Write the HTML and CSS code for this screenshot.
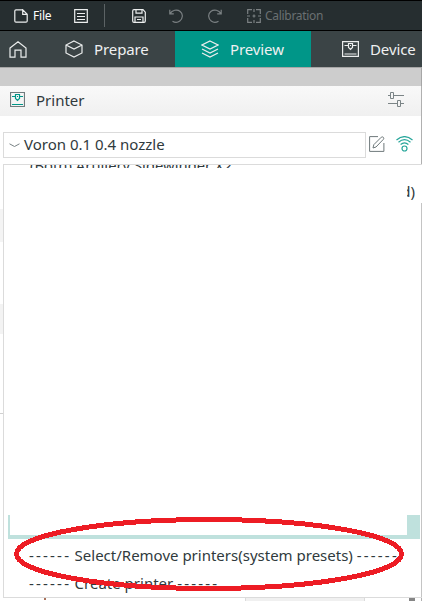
FILE: index.html
```
<!DOCTYPE html>
<html lang="en">
<head>
<meta charset="utf-8">
<title>Printer presets</title>
<link rel="stylesheet" href="styles.css">
</head>
<body>
<div class="app">
  <header class="menu">
    <svg class="i-file" width="14" height="14" viewBox="0 0 14 14"><path d="M8.5.8H2Q.8.8.8 2v10Q.8 13.2 2 13.2h10q1.200 0 1.200-1.200V5.300L8.700.8v4.500h4.500"/></svg>
    <span class="file">File</span>
    <svg class="i-list" width="14" height="14" viewBox="0 0 14 14"><path d="M.7.700h12.600v12.600H.7zM3 4.500h8M3 7.500h8M3 10.500h8"/></svg>
    <i class="sep"></i>
    <svg class="i-save" width="14" height="14" viewBox="0 0 14 14"><path d="M.7 2Q.7.700 2 .700h9l2.300 2.500V12q0 1.300-1.300 1.300H2Q.7 13.300.7 12zM4 .700v3.500h6V.700M3 13V8h8v5M5 10.500h4"/></svg>
    <svg class="i-undo dim" width="14" height="14" viewBox="0 0 14 14"><path d="M.8.800v4h4M1 4.800C3 1 8 0 11.200 2.400s2.600 7.500-.4 9.600c-2 1.500-5 1.600-7.300.2"/></svg>
    <svg class="i-redo dim" width="14" height="14" viewBox="0 0 14 14"><path d="M13.200.800v4h-4M13 4.800C11 1 6 0 2.800 2.400s-2.600 7.500.4 9.600c2 1.500 5 1.600 7.300.2"/></svg>
    <svg class="i-cal dim" width="14" height="14" viewBox="0 0 14 14"><path d="M5 .700H.700V5M9 .700h4.300V5M5 13.300H.700V9M9 13.300h4.300V9M7 0v3M7 11v3M0 7h3M11 7h3M5.500 7h3M7 5.500v3"/></svg>
    <span class="cal">Calibration</span>
  </header>
  <nav class="tabs">
    <div class="tab home"><svg width="18" height="17" viewBox="0 0 18 17"><path d="M1 7 9 .8 17 7v9.200h-5v-7H6v7H1z"/></svg></div>
    <div class="tab prepare"><svg width="18" height="18" viewBox="0 0 18 18"><path d="M9 1l8 4v8l-8 4-8-4V5zM1 5l8 4 8-4"/></svg><span>Prepare</span></div>
    <div class="tab preview"><svg width="18" height="18" viewBox="0 0 18 18"><path d="M9 1l8 4-8 4-8-4zM1 9l8 4 8-4M1 13l8 4 8-4"/></svg><span>Preview</span></div>
    <div class="tab device"><svg width="17" height="16" viewBox="0 0 17 16"><path d="M.6.600h15.800v14.800H.600zM2.500 13h12M2.500 4.500h4M10.500 4.500h4M6.500 2.500h4v4l-2 2-2-2zM8 4.500h1"/></svg><span>Device</span></div>
  </nav>
  <div class="band"></div>
  <section class="head">
    <svg class="i-printer" width="15" height="15" viewBox="0 0 15 15"><path class="frame" d="M.5.500h14v14H.5z"/><path d="M2 12.500h11M2 4.500h3.500M9.500 4.500H13M5.500 2.500h4v4l-2 2-2-2zM7 4.500h1"/></svg>
    <span class="title">Printer</span>
    <svg class="i-set" width="16" height="16" viewBox="0 0 16 16"><path d="M0 4.500h2.500M5.500 4.500H16M0 12.500h9.500M12.500 12.500H16M2.500 1.500h3v6h-3zM9.500 9.500h3v6h-3z"/></svg>
  </section>
  <section class="choose">
    <div class="combo"><svg width="11" height="5" viewBox="0 0 11 5"><path d="M.5.800 5.500 3.500 10.500.800"/></svg><span>Voron 0.1 0.4 nozzle</span></div>
    <svg class="i-edit" width="16" height="16" viewBox="0 0 16 16"><path d="M9 .600H.600v14.800h14.300V7M4 12l.8-3.300L12.300 1.200q1-.8 2 .1t.1 2L7 11z"/></svg>
    <svg class="i-wifi" width="17" height="16" viewBox="0 0 17 16"><path d="M.5 4Q8.500-2.800 16.500 4M2.500 6.200q6-5 12 0M4.600 8.500q3.900-3.400 7.800 0"/><circle cx="8.500" cy="12.500" r="2.500"/></svg>
  </section>
  <div class="rest"><i class="g1"></i><i class="g2"></i><i class="g3"></i><div class="bottom"><i class="speck"></i><i class="foot"></i><i class="thumb"></i></div></div>

  <div class="popup">
    <i class="edge"></i>
    <div class="cut"><span>(Both) Artillery Sidewinder X2</span></div>
    <div class="tail"><span>d)</span></div>
    <div class="selected"></div>
    <div class="opt remove"><span class="dash">------</span> Select/Remove printers(system presets) <span class="dash">------</span></div>
    <div class="opt create"><span class="dash">------</span> Create printer <span class="dash">------</span></div>
  </div>
  <svg class="ring" width="422" height="100" viewBox="0 0 422 100" shape-rendering="crispEdges"><ellipse cx="209" cy="53" rx="192.500" ry="34.500"/></svg>
</div>
</body>
</html>
```
FILE: styles.css
```
* { box-sizing: border-box; }
body { margin: 0; font-family: "Noto Sans", "Open Sans", sans-serif; }
svg { fill: none; stroke: #eceeee; stroke-width: 1.2; flex: none; }
span, .opt { white-space: nowrap; }
.app { position: relative; width: 422px; height: 601px; overflow: hidden; background: #fff; color: #303a3d; }
.menu { height: 31px; background: #262e30; border-top: 1px solid #000; border-bottom: 1px solid #000; display: flex; align-items: center; padding-left: 14px; color: #fff; font-size: 12px; }
.file { margin-left: 5px; width: 20px; letter-spacing: -0.2px; }
.i-list { margin-left: 21px; }
.sep { width: 1px; height: 23px; background: #5c6365; margin-left: 16px; }
.i-save { margin-left: 27px; }
.i-undo { margin-left: 23px; }
.i-redo { margin-left: 25px; }
.i-cal { margin-left: 25px; }
.dim { stroke: #7b8183; }
.cal { margin-left: 4px; color: #6a7072; letter-spacing: -0.3px; }
.tabs { height: 36px; display: flex; background: #3b4446; color: #eff0f1; font-size: 15px; }
.tab { display: flex; align-items: center; }
.home { width: 65px; padding-left: 9px; }
.prepare { width: 110px; }
.preview { width: 136px; background: #009688; padding-left: 26px; }
.device { flex: 1; padding-left: 31px; }
.tab span { margin: -1px 0 0 11px; letter-spacing: -0.1px; }
.band { height: 19px; background: #cdcdcd; border-top: 1px solid #a6a6a6; border-right: 1px solid #a6a6a6; }
.head { height: 30px; background: linear-gradient(#f9f9f9, #f0f0f0); display: flex; align-items: center; padding: 0 17px 0 10px; }
.head, .choose, .rest { border-right: 1px solid #b0b0b0; }
.i-printer { stroke: #009688; margin-top: -3px; }
.i-printer .frame { stroke: #707b7d; }
.title { margin: -3px 0 0 11px; font-size: 15px; }
.i-set { margin: -4px 0 0 auto; stroke: #7b8486; stroke-width: 1; }
.choose { height: 48px; display: flex; align-items: flex-start; padding: 16px 0 0 3px; }
.combo { width: 363px; height: 26px; border: 1px solid #dbdbdb; display: flex; align-items: center; padding-left: 5px; font-size: 15px; }
.combo svg { stroke: #788284; stroke-width: 1; }
.combo span { margin: -2px 0 0 4px; }
.i-edit { margin: 4px 0 0 3px; stroke: #6f797b; stroke-width: 1; }
.i-wifi { margin: 4px 0 0 11px; stroke: #26a69a; stroke-width: 1.2; }
.rest { height: 437px; display: flex; flex-direction: column; }
.g1 { height: 33px; margin-top: 45px; background: #f4f4f4; }
.g2 { height: 30px; margin-top: 62px; background: #f3f3f3; }
.g3 { height: 1px; margin-top: 79px; background: #d0d0d0; }
.bottom { height: 5px; margin-top: 182px; display: flex; }
.speck { width: 2px; height: 4px; margin-left: 44px; background: #a8715a; }
.foot { height: 5px; width: 120px; margin-left: 199px; background: #f0f0f0; border: solid #dbdbdb; border-width: 0 1px; }
.thumb { width: 6px; height: 5px; margin-left: 44px; background: #858585; }
.popup { position: absolute; left: 3px; top: 164px; width: 419px; height: 434px; background: #fff; border: 1px solid #dbdbdb; border-right: 0; font-size: 15px; display: flex; flex-direction: column; }
.edge { position: absolute; right: 0; top: 38px; bottom: 0; width: 1px; background: #c4c4c4; }
.cut { height: 3px; overflow: hidden; padding-left: 26px; font-size: 14.8px; }
.cut span { display: block; line-height: 20px; margin-top: -10px; }
.tail { height: 20px; width: 8px; margin: 13px 0 0 403px; overflow: hidden; direction: rtl; line-height: 20px; }
.tail span { unicode-bidi: bidi-override; direction: ltr; }
.selected { height: 24px; width: 412px; margin: 315px 0 0 4px; border: solid #bfe1dd; border-width: 0 13px 4px 2px; }
.opt { line-height: 28px; height: 28px; padding-left: 25px; }
.dash { letter-spacing: 2.2px; margin-right: -0.500px; }
.remove { margin-top: 2px; }
.ring { position: absolute; left: 0; top: 501px; stroke: #ed1c24; stroke-width: 5; }
```
